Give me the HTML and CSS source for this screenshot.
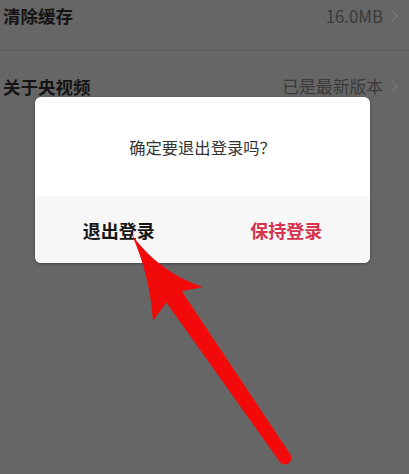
FILE: index.html
```html
<!DOCTYPE html>
<html lang="zh-CN">
<head>
<meta charset="utf-8">
<title>退出登录</title>
<link rel="stylesheet" href="styles.css">
</head>
<body>
<div class="page">
  <ul class="settings">
    <li class="row">
      <span class="label">清除缓存</span>
      <span class="value">16.0MB
        <svg class="chev" width="7" height="12" viewBox="0 0 7 12"><polyline points="1,1 6,6 1,11" fill="none" stroke="#7a7a7a" stroke-width="1.3"/></svg>
      </span>
    </li>
    <li class="row">
      <span class="label">关于央视频</span>
      <span class="value">已是最新版本
        <svg class="chev" width="7" height="12" viewBox="0 0 7 12"><polyline points="1,1 6,6 1,11" fill="none" stroke="#7a7a7a" stroke-width="1.3"/></svg>
      </span>
    </li>
  </ul>

  <div class="dialog">
    <div class="dialog-body">确定要退出登录吗？</div>
    <div class="dialog-foot">
      <button class="btn btn-quit">退出登录</button>
      <button class="btn btn-keep">保持登录</button>
    </div>
  </div>

  <svg class="arrow" width="409" height="474" viewBox="0 0 409 474">
    <path d="M132,235 Q160,273 203,287 L173,293 L153,321 Q150,276 132,235 Z" fill="#f20a0a"/>
    <path d="M177,284 L290.5,454.5 L279.5,461.5 L161,295 Z" fill="#f20a0a"/>
    <circle cx="285" cy="458" r="6.5" fill="#f20a0a"/>
  </svg>
</div>
</body>
</html>
```

FILE: styles.css
```css
html, body {
  margin: 0;
  padding: 0;
}
body {
  background: #666666;
  font-family: "Noto Sans CJK SC", "Noto Sans", sans-serif;
  width: 409px;
  height: 474px;
  overflow: hidden;
}
.page {
  position: relative;
  width: 409px;
  height: 474px;
  overflow: hidden;
}
.settings {
  list-style: none;
  margin: -19px 0 0 0;
  padding: 0;
}
.row {
  height: 70px;
  box-sizing: border-box;
  display: flex;
  align-items: center;
  justify-content: space-between;
  padding: 0 11px 0 3px;
  border-bottom: 1px solid #5d5d5d;
}
.row:last-child {
  border-bottom: none;
}
.label {
  font-size: 17.5px;
  font-weight: 700;
  color: #141414;
}
.value {
  display: flex;
  align-items: center;
  gap: 8px;
  font-size: 16.8px;
  color: #3a3a3a;
}
.chev {
  display: block;
}
.dialog {
  position: absolute;
  left: 35px;
  top: 97px;
  width: 335px;
  height: 166px;
  background: #ffffff;
  border-radius: 6px;
  overflow: hidden;
  box-shadow: 0 1px 3px rgba(0, 0, 0, 0.35);
  display: flex;
  flex-direction: column;
}
.dialog-body {
  height: 99px;
  display: flex;
  align-items: center;
  justify-content: center;
  font-size: 16.3px;
  color: #333333;
}
.dialog-foot {
  flex: 1;
  display: flex;
  background: #f7f7f8;
}
.btn {
  flex: 1;
  border: none;
  background: transparent;
  font-family: inherit;
  font-size: 18px;
  font-weight: 700;
  padding: 0;
  margin: 0;
}
.btn-quit {
  color: #161616;
}
.btn-keep {
  color: #d7334d;
}
.arrow {
  position: absolute;
  left: 0;
  top: 0;
  pointer-events: none;
}
```
